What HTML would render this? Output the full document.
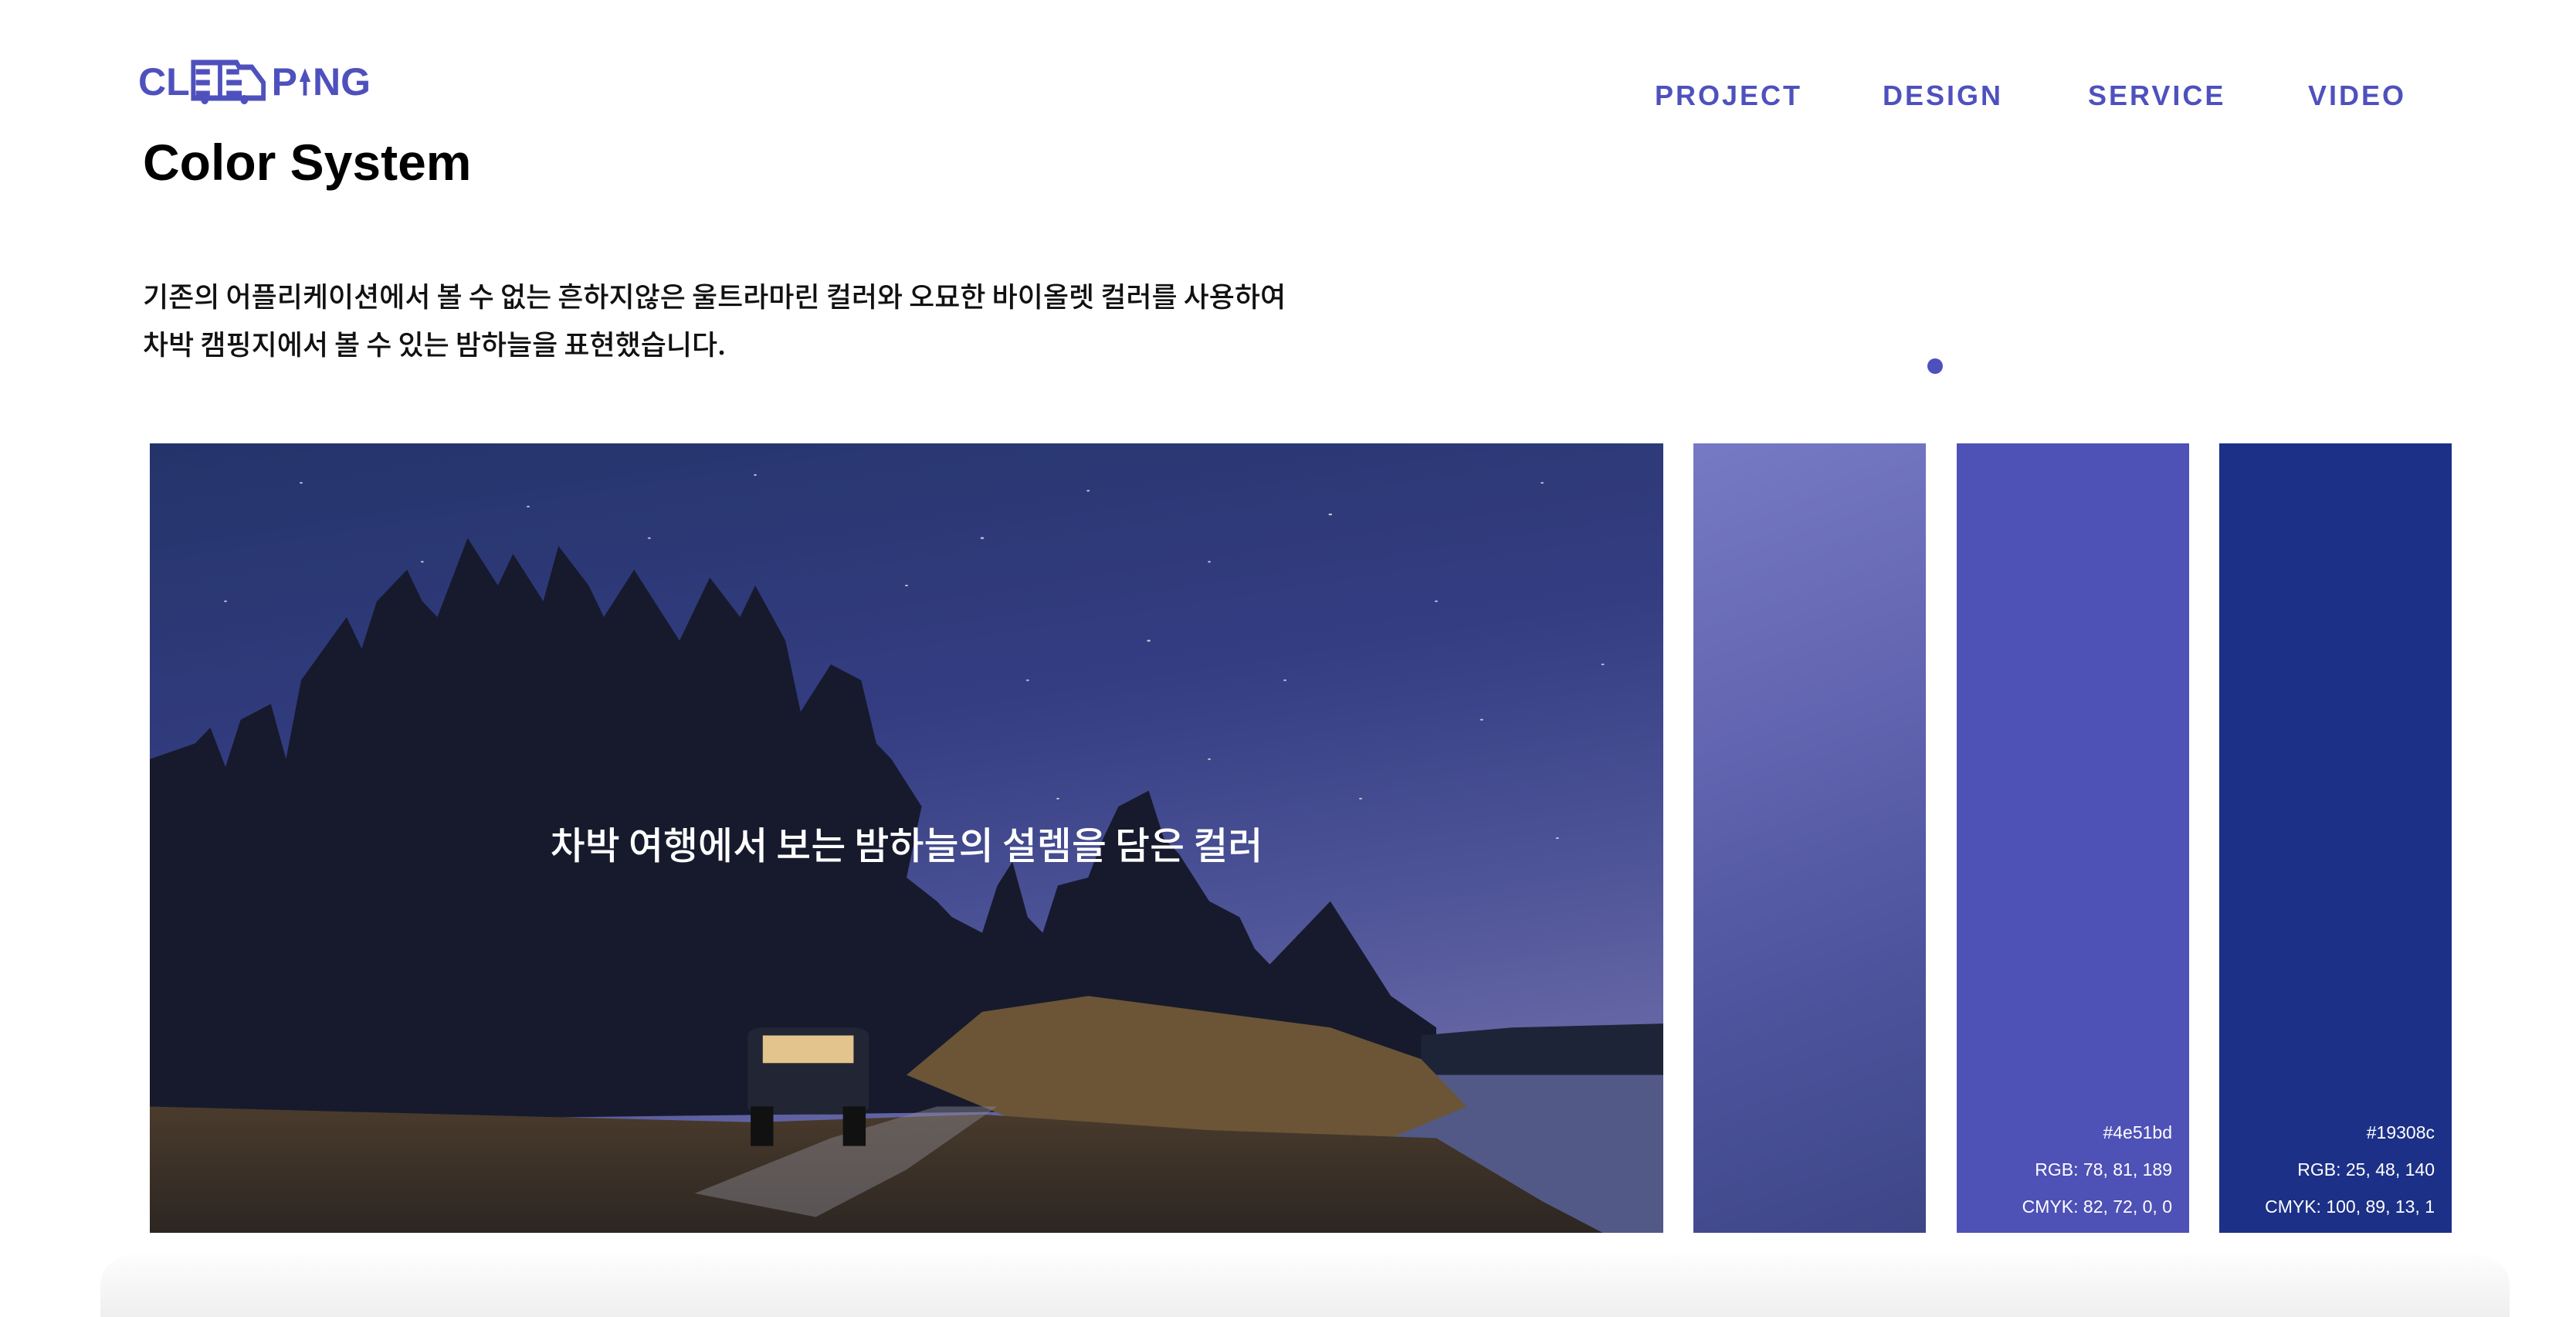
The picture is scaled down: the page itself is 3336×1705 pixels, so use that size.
<!DOCTYPE html>
<html><head><meta charset="utf-8"><style>
*{margin:0;padding:0;box-sizing:border-box}
body{width:3336px;height:1686px;background:#fff;position:relative;overflow:hidden;font-family:"Liberation Sans","Noto Sans CJK KR",sans-serif}
.abs{position:absolute}
.nav{position:absolute;top:104px;font-size:36px;font-weight:700;color:#4e51bd;letter-spacing:3px;line-height:40px}
.title{left:185px;top:170px;font-size:66px;font-weight:700;color:#000;line-height:80px}
.para{left:185px;top:351px;font-size:36px;line-height:62px;color:#111;font-family:"Noto Sans CJK KR",sans-serif;font-weight:500;white-space:nowrap}
.sw{position:absolute;top:574px;height:1022px;width:301px}
.sw .t{position:absolute;right:22px;color:#fff;font-size:23px;line-height:24px;text-align:right;white-space:nowrap}
</style></head><body>
<div class="abs" style="left:179px;top:76px;height:60px;display:flex;align-items:center;color:#4e51bd;font-size:50px;font-weight:700">
<span>CL</span>
<svg width="104" height="58" viewBox="0 0 126 58" preserveAspectRatio="none" style="margin:0 1px"><g fill="none" stroke="#4e51bd" stroke-width="7"><path d="M4 4 H72 L76 10 H96 L114 30 V50 H4 Z"/><path d="M8 16 H30 M8 30 H30 M8 44 H30"/><path d="M56 16 H76 M56 30 H80 M56 44 H80"/><path d="M46 4 V50"/></g><circle cx="22" cy="52" r="6" fill="#4e51bd"/><circle cx="84" cy="52" r="6" fill="#4e51bd"/></svg>
<span>P</span>
<svg width="16" height="40" viewBox="0 0 20 44" style="margin:0 2px"><path d="M10 0 L19 22 H13 V44 H7 V22 H1 Z" fill="#4e51bd"/></svg>
<span>NG</span>
</div>
<div class="nav" style="left:2143px">PROJECT</div>
<div class="nav" style="left:2438px">DESIGN</div>
<div class="nav" style="left:2704px">SERVICE</div>
<div class="nav" style="left:2989px">VIDEO</div>
<div class="abs title">Color System</div>
<div class="abs para">기존의 어플리케이션에서 볼 수 없는 흔하지않은 울트라마린 컬러와 오묘한 바이올렛 컬러를 사용하여<br>차박 캠핑지에서 볼 수 있는 밤하늘을 표현했습니다.</div>
<div class="abs" style="left:2496px;top:464px;width:20px;height:20px;border-radius:50%;background:#4e51bd"></div>

<div class="abs" style="left:194px;top:574px;width:1960px;height:1022px;overflow:hidden">
<svg width="1960" height="1022" viewBox="0 0 100 100" preserveAspectRatio="none">
<defs>
<linearGradient id="sky" x1="0" y1="0" x2="0.3" y2="1"><stop offset="0" stop-color="#24346a"/><stop offset="0.45" stop-color="#343d82"/><stop offset="0.75" stop-color="#4e5498"/><stop offset="1" stop-color="#6a6aa8"/></linearGradient>
<linearGradient id="gr" x1="0" y1="0" x2="0" y2="1"><stop offset="0" stop-color="#4a3b2c"/><stop offset="1" stop-color="#2c2622"/></linearGradient>
</defs>
<rect width="100" height="100" fill="url(#sky)"/>
<g fill="#fff" opacity="0.7">
<circle cx="10" cy="5" r="0.1"/><circle cx="25" cy="8" r="0.1"/><circle cx="40" cy="4" r="0.1"/><circle cx="55" cy="12" r="0.12"/><circle cx="62" cy="6" r="0.1"/><circle cx="70" cy="15" r="0.1"/><circle cx="78" cy="9" r="0.12"/><circle cx="85" cy="20" r="0.1"/><circle cx="92" cy="5" r="0.1"/><circle cx="96" cy="28" r="0.1"/><circle cx="88" cy="35" r="0.1"/><circle cx="75" cy="30" r="0.1"/><circle cx="66" cy="25" r="0.12"/><circle cx="58" cy="30" r="0.1"/><circle cx="50" cy="18" r="0.1"/><circle cx="33" cy="12" r="0.1"/><circle cx="18" cy="15" r="0.1"/><circle cx="5" cy="20" r="0.1"/><circle cx="80" cy="45" r="0.1"/><circle cx="93" cy="50" r="0.1"/><circle cx="70" cy="40" r="0.1"/><circle cx="60" cy="45" r="0.1"/>
</g>
<polygon fill="#161a2c" points="0,40 3,38 4,36 5,41 6,35 8,33 9,40 10,30 13,22 14,26 15,20 17,16 18,20 19,22 21,12 23,18 24,14 26,20 27,13 29,18 30,22 32,16 34,22 35,25 37,17 39,22 40,18 42,25 43,34 45,28 47,30 48,38 49,40 51,46 50,55 52,58 53,60 55,62 56,56 57,53 58,60 59,62 60,56 62,55 63,50 64,46 66,44 67,50 68,52 70,58 72,60 73,64 74,66 76,62 78,58 80,64 82,70 85,74 85,84 0,86"/>
<polygon fill="#1e2438" points="84,75 90,74 100,73.5 100,81 84,81"/>
<rect x="80" y="80" width="20" height="20" fill="#525986"/>
<polygon fill="#6b5536" points="50,80 55,72 62,70 70,72 78,74 84,78 87,84 82,88 60,88"/>
<polygon fill="url(#gr)" points="0,84 20,85 40,86 55,85 70,87 85,88 92,96 96,100 0,100"/>
<polygon fill="#8c8a92" opacity="0.45" points="36,95 45,88 52,84 56,84 50,92 44,98"/>
<rect x="39.5" y="74" width="8" height="11" rx="1" fill="#222533"/>
<rect x="40.5" y="75" width="6" height="3.5" fill="#e3c48c"/>
<rect x="39.7" y="84" width="1.5" height="5" fill="#111"/><rect x="45.8" y="84" width="1.5" height="5" fill="#111"/>
</svg>
<div class="abs" style="left:0;width:1960px;top:482px;text-align:center;color:#fff;font-size:49px;font-family:'Noto Sans CJK KR',sans-serif;font-weight:500">차박 여행에서 보는 밤하늘의 설렘을 담은 컬러</div>
</div>

<div class="sw" style="left:2193px;background:linear-gradient(160deg,#7679c4 0%,#6668b4 30%,#4f559e 65%,#3e4688 100%)"></div>
<div class="sw" style="left:2534px;background:#4e51b6">
<div class="t" style="top:880px">#4e51bd</div><div class="t" style="top:928px">RGB: 78, 81, 189</div><div class="t" style="top:976px">CMYK: 82, 72, 0, 0</div></div>
<div class="sw" style="left:2874px;background:#1c3087">
<div class="t" style="top:880px">#19308c</div><div class="t" style="top:928px">RGB: 25, 48, 140</div><div class="t" style="top:976px">CMYK: 100, 89, 13, 1</div></div>

<div class="abs" style="left:130px;top:1625px;width:3120px;height:80px;border-radius:40px 40px 0 0;background:linear-gradient(#fdfdfd,#efefef)"></div>
</body></html>
